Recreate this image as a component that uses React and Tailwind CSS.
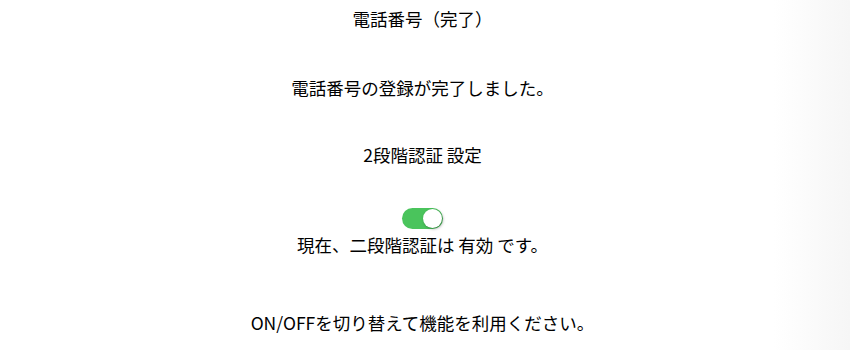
import React, { useState } from "react";

const font = { fontFamily: '"Noto Sans CJK JP", "Noto Sans", sans-serif' };

function Toggle({ on, onChange }) {
  return (
    <button
      type="button"
      onClick={() => onChange(!on)}
      className={`relative flex h-[21px] w-[41px] items-center rounded-full transition-colors ${on ? "bg-[#4ac45c]" : "bg-[#d4d4d4]"}`}
    >
      <span
        className={`absolute top-[1px] h-[19px] w-[19px] rounded-full bg-white shadow-[1px_1px_3px_rgba(0,0,0,0.35)] transition-all ${on ? "left-[21px]" : "left-[1px]"}`}
      />
    </button>
  );
}

export default function App() {
  const [enabled, setEnabled] = useState(true);

  return (
    <div
      className="flex h-[350px] w-full justify-center bg-gradient-to-r from-white from-[91%] to-[#f6f6f6] pr-[5px] text-[17.5px] leading-[24px] text-black"
      style={font}
    >
      <div className="flex flex-col items-center pt-[7px]">
        <h1 className="font-normal">電話番号（完了）</h1>
        <p className="mt-[45px]">電話番号の登録が完了しました。</p>
        <h2 className="mt-[43px] font-normal">2段階認証 設定</h2>
        <div className="mt-[41px]">
          <Toggle on={enabled} onChange={setEnabled} />
        </div>
        <p className="mt-[4px]">現在、二段階認証は {enabled ? "有効" : "無効"} です。</p>
        <p className="mt-[54px]">ON/OFFを切り替えて機能を利用ください。</p>
      </div>
    </div>
  );
}
